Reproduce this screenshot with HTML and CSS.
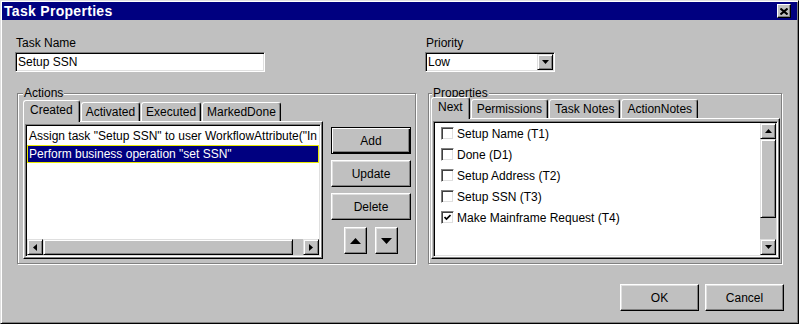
FILE: index.html
```html
<!DOCTYPE html>
<html lang="en">
<head>
  <meta charset="UTF-8">
  <title>Task Properties</title>
  <link rel="stylesheet" href="styles.css">
</head>
<body>
  <div class="window">
    <div class="titlebar">
      <span class="title">Task Properties</span>
      <button class="close-btn" title="Close">
        <svg width="8" height="7" viewBox="0 0 8 7"><path d="M0.5 0.5 L7.5 6.5 M7.5 0.5 L0.5 6.5" stroke="#000" stroke-width="2" fill="none"/></svg>
      </button>
    </div>

    <div class="dialog-body">
      <div class="fields">
        <div class="field name-field">
          <label>Task Name</label>
          <div class="textbox">Setup SSN</div>
        </div>
        <div class="field priority-field">
          <label>Priority</label>
          <div class="combo">
            <span class="combo-value">Low</span>
            <span class="arrow-btn combo-btn">
              <svg width="7" height="4" viewBox="0 0 7 4"><path d="M0 0 H7 L3.5 4 Z" fill="#000"/></svg>
            </span>
          </div>
        </div>
      </div>

      <div class="groups">
        <div class="group actions-group">
          <span class="legend">Actions</span>
          <div class="group-inner actions-inner">
            <div class="tabbed actions-tabbed">
              <div class="tabs">
                <span class="tab selected">Created</span>
                <span class="tab">Activated</span>
                <span class="tab">Executed</span>
                <span class="tab">MarkedDone</span>
              </div>
              <div class="panel actions-panel">
                <div class="listbox">
                  <div class="rows">
                    <div class="row">Assign task "Setup SSN" to user WorkflowAttribute("In</div>
                    <div class="row selected">Perform business operation "set SSN"</div>
                  </div>
                  <div class="hscroll">
                    <span class="arrow-btn">
                      <svg width="4" height="7" viewBox="0 0 4 7"><path d="M4 0 V7 L0 3.5 Z" fill="#000"/></svg>
                    </span>
                    <span class="thumb hthumb"></span>
                    <span class="track"></span>
                    <span class="arrow-btn">
                      <svg width="4" height="7" viewBox="0 0 4 7"><path d="M0 0 V7 L4 3.5 Z" fill="#000"/></svg>
                    </span>
                  </div>
                </div>
              </div>
            </div>
            <div class="side-buttons">
              <button class="btn default">Add</button>
              <button class="btn">Update</button>
              <button class="btn">Delete</button>
              <div class="move-buttons">
                <button class="btn move-btn">
                  <svg width="11" height="6" viewBox="0 0 11 6"><path d="M0 6 H11 L5.5 0 Z" fill="#000"/></svg>
                </button>
                <button class="btn move-btn">
                  <svg width="11" height="6" viewBox="0 0 11 6"><path d="M0 0 H11 L5.5 6 Z" fill="#000"/></svg>
                </button>
              </div>
            </div>
          </div>
        </div>

        <div class="group properties-group">
          <span class="legend">Properties</span>
          <div class="group-inner properties-inner">
            <div class="tabbed properties-tabbed">
              <div class="tabs">
                <span class="tab selected">Next</span>
                <span class="tab">Permissions</span>
                <span class="tab">Task Notes</span>
                <span class="tab">ActionNotes</span>
              </div>
              <div class="panel properties-panel">
                <div class="listbox checklist">
                  <div class="check-rows">
                    <div class="check-row"><span class="checkbox"></span>Setup Name (T1)</div>
                    <div class="check-row"><span class="checkbox"></span>Done (D1)</div>
                    <div class="check-row"><span class="checkbox"></span>Setup Address (T2)</div>
                    <div class="check-row"><span class="checkbox"></span>Setup SSN (T3)</div>
                    <div class="check-row">
                      <span class="checkbox">
                        <svg width="7" height="7" viewBox="0 0 7 7"><path d="M0.5 3 L2.5 5 L6.5 1" stroke="#000" stroke-width="1.7" fill="none"/></svg>
                      </span>Make Mainframe Request (T4)
                    </div>
                  </div>
                  <div class="vscroll">
                    <span class="arrow-btn">
                      <svg width="7" height="4" viewBox="0 0 7 4"><path d="M0 4 H7 L3.5 0 Z" fill="#000"/></svg>
                    </span>
                    <span class="thumb vthumb"></span>
                    <span class="track"></span>
                    <span class="arrow-btn">
                      <svg width="7" height="4" viewBox="0 0 7 4"><path d="M0 0 H7 L3.5 4 Z" fill="#000"/></svg>
                    </span>
                  </div>
                </div>
              </div>
            </div>
          </div>
        </div>
      </div>

      <div class="footer">
        <button class="btn footer-btn">OK</button>
        <button class="btn footer-btn">Cancel</button>
      </div>
    </div>
  </div>
</body>
</html>
```

FILE: styles.css
```css
* {
  box-sizing: border-box;
}
body {
  margin: 0;
  background-color: #c0c0c0;
  font-family: "Liberation Sans", Arial, sans-serif;
  font-size: 12px;
  color: #000;
}
.window {
  width: 799px;
  height: 324px;
  padding: 1px;
  background-color: #c0c0c0;
  border: 1px solid;
  border-color: #dfdfdf #000 #000 #dfdfdf;
  box-shadow: inset 1px 1px #fff, inset -1px -1px #808080;
}
.titlebar {
  height: 18px;
  background-color: #000080;
  display: flex;
  align-items: center;
  justify-content: space-between;
  padding: 0 6px 0 2px;
}
.title {
  color: white;
  font-weight: bold;
  font-size: 14px;
  line-height: 17px;
  padding-top: 1px;
  letter-spacing: 0.3px;
}
.close-btn {
  width: 14px;
  height: 14px;
  padding: 0;
  display: flex;
  align-items: center;
  justify-content: center;
  background-color: #c0c0c0;
  border: 1px solid;
  border-color: #fff #000 #000 #fff;
  box-shadow: inset -1px -1px #808080;
}
.dialog-body {
  padding: 16px 13px 0 13px;
}
.fields {
  display: flex;
}
.name-field {
  width: 250px;
}
.priority-field {
  width: 130px;
  margin-left: 160px;
}
label {
  display: block;
  line-height: 14px;
  margin-bottom: 2px;
  padding-left: 1px;
}
.textbox,
.combo {
  height: 20px;
  background-color: white;
  border: 1px solid;
  border-color: #808080 #fff #fff #808080;
  box-shadow: inset 1px 1px #000, inset -1px -1px #dfdfdf;
  line-height: 18px;
  padding: 0 2px;
}
.combo {
  display: flex;
  justify-content: space-between;
  align-items: center;
  padding: 0 1px 0 2px;
}
.combo-btn {
  width: 16px;
  height: 16px;
}
.arrow-btn {
  width: 16px;
  height: 16px;
  flex: none;
  display: flex;
  align-items: center;
  justify-content: center;
  background-color: #c0c0c0;
  border: 1px solid;
  border-color: #dfdfdf #000 #000 #dfdfdf;
  box-shadow: inset 1px 1px #fff, inset -1px -1px #808080;
}
.groups {
  display: flex;
  gap: 12px;
  margin-top: 21px;
  padding-left: 2px;
}
.group {
  position: relative;
  height: 171px;
  border: 1px solid #808080;
  box-shadow: inset 1px 1px #fff, 1px 1px #fff;
}
.actions-group {
  width: 399px;
}
.properties-group {
  width: 354px;
}
.legend {
  position: absolute;
  top: -8px;
  left: 5px;
  padding: 0 1px;
  line-height: 14px;
  background-color: #c0c0c0;
}
.properties-group .legend {
  left: 3px;
}
.group-inner {
  display: flex;
}
.actions-inner {
  padding: 6px 0 0 5px;
}
.properties-inner {
  padding: 3px 0 0 2px;
}
.actions-tabbed {
  width: 300px;
}
.properties-tabbed {
  width: 349px;
}
.tabs {
  display: flex;
  align-items: flex-end;
  gap: 1px;
  height: 21px;
}
.tab {
  position: relative;
  height: 19px;
  line-height: 18px;
  padding: 0 4px;
  background-color: #c0c0c0;
  border: 1px solid;
  border-bottom: none;
  border-color: #fff #000 #000 #fff;
  border-radius: 3px 3px 0 0;
  box-shadow: inset -1px 0 #808080;
  white-space: nowrap;
}
.properties-tabbed .tab {
  padding: 0 5px;
}
.tab.selected,
.properties-tabbed .tab.selected {
  height: 22px;
  margin-bottom: -1px;
  line-height: 19px;
  padding: 0 6px;
  z-index: 1;
}
.panel {
  padding: 2px 1px 1px 1px;
  border: 1px solid;
  border-color: #fff #000 #000 #fff;
  box-shadow: inset -1px -1px #808080;
}
.actions-panel {
  height: 138px;
}
.properties-panel {
  height: 141px;
}
.listbox {
  height: 100%;
  background-color: white;
  border: 1px solid;
  border-color: #808080 #fff #fff #808080;
  box-shadow: inset 1px 1px #000, inset -1px -1px #dfdfdf;
  padding: 1px;
  display: flex;
  flex-direction: column;
  overflow: hidden;
}
.rows {
  flex: 1;
  padding-top: 1px;
  overflow: hidden;
}
.row {
  height: 18px;
  line-height: 18px;
  padding-left: 2px;
  white-space: nowrap;
  overflow: hidden;
}
.row.selected {
  background-color: #000080;
  color: white;
  box-shadow: inset 0 0 0 1px #e8e800;
}
.hscroll {
  display: flex;
  height: 16px;
  flex: none;
}
.thumb {
  background-color: #c0c0c0;
  border: 1px solid;
  border-color: #dfdfdf #000 #000 #dfdfdf;
  box-shadow: inset 1px 1px #fff, inset -1px -1px #808080;
}
.hthumb {
  width: 250px;
}
.track {
  flex: 1;
  background-color: #c0c0c0;
}
.checklist {
  flex-direction: row;
}
.check-rows {
  flex: 1;
}
.check-row {
  display: flex;
  align-items: center;
  gap: 3px;
  height: 21px;
  padding-left: 6px;
  white-space: nowrap;
}
.checkbox {
  width: 13px;
  height: 13px;
  display: flex;
  align-items: center;
  justify-content: center;
  background-color: white;
  border: 1px solid;
  border-color: #808080 #fff #fff #808080;
  box-shadow: inset 1px 1px #404040, inset -1px -1px #dfdfdf;
}
.vscroll {
  width: 16px;
  display: flex;
  flex-direction: column;
}
.vthumb {
  height: 79px;
}
.side-buttons {
  width: 80px;
  margin-left: 8px;
  padding-top: 27px;
  display: flex;
  flex-direction: column;
  gap: 6px;
}
.btn {
  height: 27px;
  padding: 0;
  font-family: inherit;
  font-size: 12px;
  color: #000;
  background-color: #c0c0c0;
  border: 1px solid;
  border-color: #fff #000 #000 #fff;
  box-shadow: inset -1px -1px #808080, inset 1px 1px #dfdfdf;
}
.btn.default {
  border-color: #000;
  box-shadow: inset 1px 1px #fff, inset -1px -1px #000, inset -2px -2px #808080;
}
.move-buttons {
  display: flex;
  justify-content: center;
  gap: 8px;
  margin-top: 1px;
}
.move-btn {
  width: 23px;
  display: flex;
  align-items: center;
  justify-content: center;
}
.footer {
  display: flex;
  justify-content: flex-end;
  gap: 6px;
  margin-top: 20px;
}
.footer-btn {
  width: 79px;
}
```
